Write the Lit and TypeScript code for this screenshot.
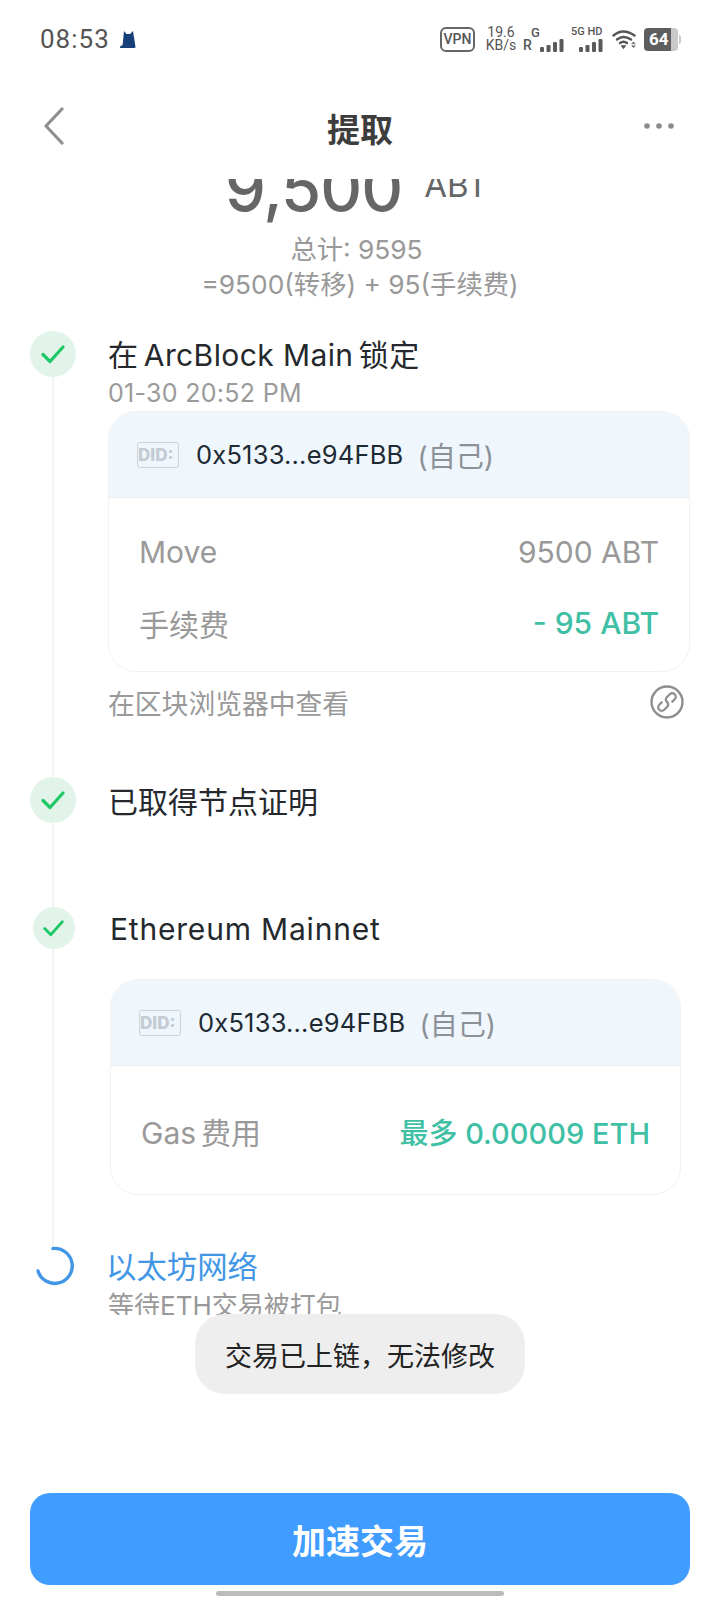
import { LitElement, html, css, svg } from "lit";
import { customElement } from "lit/decorators.js";

const check = html`<svg width="26" height="22" viewBox="0 0 26 22">
  <path d="M3 11.5 L10 18.5 L23 4" fill="none" stroke="#1fc866" stroke-width="3.2" stroke-linecap="round" stroke-linejoin="round" />
</svg>`;

const bars = () => svg`
  <rect x="0" y="8" width="4" height="5" rx="1.2" />
  <rect x="6.5" y="6" width="4" height="7" rx="1.2" />
  <rect x="13" y="3" width="4" height="10" rx="1.2" />
  <rect x="19.5" y="0" width="4" height="13" rx="1.2" />
`;

@customElement("app-root")
export class AppRoot extends LitElement {
  static styles = css`
    :host {
      display: block;
      position: relative;
      width: 720px;
      height: 1600px;
      overflow: hidden;
      background: #fff;
      color: #25292d;
      font-family: "Inter", "Noto Sans CJK SC", sans-serif;
    }

    /* status bar */
    .status {
      height: 78px;
      display: flex;
      align-items: center;
      justify-content: space-between;
      padding: 0 39px 0 40px;
      color: #555;
    }
    .status-left {
      display: flex;
      align-items: center;
      gap: 9px;
      font: 400 26px "Roboto", sans-serif;
      letter-spacing: 1px;
    }
    .status-right {
      display: flex;
      align-items: center;
      font-family: "Roboto", sans-serif;
    }
    .vpn {
      width: 31px;
      height: 21px;
      border: 2px solid #666;
      border-radius: 6px;
      font-size: 14px;
      font-weight: 500;
      line-height: 21px;
      text-align: center;
      margin-right: 10px;
    }
    .speed {
      width: 32px;
      font-size: 14px;
      line-height: 13px;
      text-align: center;
      margin-right: 6px;
    }
    .net {
      position: relative;
      width: 42px;
      height: 26px;
      font-size: 13px;
      font-weight: 500;
      line-height: 13px;
    }
    .net svg {
      position: absolute;
      right: 0;
      bottom: 0;
    }
    .net .g {
      position: absolute;
      top: 0;
      left: 8px;
    }
    .net .r {
      position: absolute;
      left: 0;
      bottom: 0;
      font-size: 14px;
    }
    .net5 {
      position: relative;
      width: 33px;
      height: 26px;
      margin: 0 8px 0 6px;
      font-size: 11px;
      font-weight: 500;
      line-height: 12px;
      white-space: nowrap;
    }
    .net5 svg {
      position: absolute;
      right: 0;
      bottom: 0;
    }
    .battery {
      display: flex;
      align-items: center;
      margin-left: 7px;
    }
    .battery .level {
      width: 27px;
      height: 23px;
      background: #5e5e5e;
      border-radius: 4px 0 0 4px;
      color: #fff;
      font-size: 17px;
      font-weight: 700;
      line-height: 23px;
      padding-left: 5px;
      box-sizing: border-box;
    }
    .battery .rest {
      width: 7px;
      height: 23px;
      background: #c9c9c9;
      border-radius: 0 4px 4px 0;
      margin-right: 1px;
    }
    .battery .nub {
      width: 2px;
      height: 9px;
      background: #c9c9c9;
      border-radius: 0 2px 2px 0;
    }

    /* nav */
    .nav {
      height: 95px;
      margin-bottom: 6px;
      display: flex;
      align-items: center;
      justify-content: space-between;
      padding: 0 46px 0 43px;
    }
    .nav h1 {
      flex: 1;
      margin: 4px 0 0;
      padding-left: 11px;
      text-align: center;
      font-size: 33px;
      font-weight: 700;
      color: #3d3d3d;
    }

    /* scrolling part, clipped under the nav and above the footer */
    .scroll {
      height: 1136px;
      overflow: hidden;
    }
    .amount {
      height: 46px;
      overflow: hidden;
    }
    .amount-inner {
      margin-top: -35px;
      display: flex;
      justify-content: center;
      color: #666;
      padding-right: 7px;
    }
    .amount-value {
      font-size: 65px;
      font-weight: 500;
      line-height: 88px;
      letter-spacing: -1px;
    }
    .amount-unit {
      font-size: 33px;
      line-height: 32px;
      margin: 25px 0 0 22px;
    }
    .total {
      color: #999;
      text-align: center;
      font-size: 26.3px;
      line-height: 35px;
      padding-top: 7px;
      height: 99px;
    }
    .total-sum {
      margin-right: 7px;
    }

    .steps {
      padding-left: 30px;
    }
    .step {
      display: flex;
      gap: 32px;
      width: 660px;
    }
    .rail {
      flex: none;
      width: 46px;
      display: flex;
      flex-direction: column;
      align-items: center;
    }
    .dot {
      flex: none;
      width: 46px;
      height: 46px;
      border-radius: 50%;
      background: #e2f3ea;
      display: flex;
      align-items: center;
      justify-content: center;
    }
    .dot.small {
      width: 42px;
      height: 42px;
      margin-left: 1px;
    }
    .dot.small svg {
      width: 23px;
      height: 20px;
    }
    .line {
      flex: 1;
      width: 2px;
      background: #f3f4f5;
    }
    .body {
      flex: 1;
      min-width: 0;
    }
    .s1 {
      height: 446px;
    }
    .s2 {
      height: 130px;
    }
    .s3 {
      height: 339px;
    }
    .s3 .body {
      padding-left: 2px;
    }
    .title {
      font-size: 30px;
      line-height: 48px;
      letter-spacing: 0.4px;
    }
    .s2 .title {
      letter-spacing: 0;
      padding-top: 1px;
    }
    .s3 .title {
      margin-top: -2px;
      letter-spacing: 0.8px;
    }
    .date {
      color: #9a9a9a;
      font-size: 25px;
      line-height: 28px;
      letter-spacing: 0.3px;
    }

    .card {
      border: 1px solid #f0f1f2;
      border-radius: 28px;
      overflow: hidden;
      margin-top: 4px;
    }
    .s3 .card {
      margin: 26px 9px 0 0;
    }
    .card-head {
      height: 85px;
      background: #eff7fd;
      border-bottom: 1px solid #e9edf0;
      display: flex;
      align-items: center;
      padding-left: 28px;
    }
    .did {
      width: 40px;
      height: 24px;
      border: 1px solid #ccd3d9;
      border-radius: 3px;
      color: #c4cbd2;
      font-size: 17px;
      font-weight: 800;
      line-height: 24px;
      overflow: hidden;
      margin-right: 17px;
      white-space: nowrap;
    }
    .addr {
      font-size: 25.5px;
      letter-spacing: 0.2px;
      color: #1e2a33;
    }
    .self {
      color: #8b9197;
      font-size: 28px;
      margin-left: 14px;
    }
    .card-body {
      padding: 18px 30px 13px;
    }
    .row {
      display: flex;
      justify-content: space-between;
      align-items: center;
      height: 71px;
      font-size: 30px;
      color: #999;
    }
    .s3 .card-body {
      padding: 29px 30px 28px;
    }
    .s3 .row .green {
      font-size: 29px;
    }
    .green {
      color: #3fc0a5;
      font-weight: 500;
    }
    .explorer {
      display: flex;
      align-items: center;
      justify-content: space-between;
      color: #999;
      font-size: 26.8px;
      height: 60px;
      padding-right: 6px;
    }

    .s4 .rail {
      padding-left: 3px;
      box-sizing: border-box;
    }
    .s4 .body {
      margin: -2px 0 0 -2px;
    }
    .s4 .title {
      color: #4396e6;
      font-size: 30.4px;
      line-height: 46px;
      letter-spacing: 0;
    }
    .s4 .sub {
      color: #999;
      font-size: 26px;
      line-height: 30px;
      margin-top: 1px;
      padding-left: 2px;
    }

    /* toast */
    .toast {
      position: absolute;
      left: 195px;
      top: 1314px;
      width: 330px;
      height: 80px;
      border-radius: 30px;
      background: #eeeeee;
      color: #222;
      font-size: 27px;
      line-height: 85px;
      text-align: center;
    }

    /* footer */
    .footer {
      padding: 178px 30px 0;
    }
    .btn {
      height: 92px;
      border-radius: 20px;
      background: #409cff;
      color: #fff;
      font-size: 34px;
      font-weight: 700;
      display: flex;
      align-items: center;
      justify-content: center;
    }
    .home {
      width: 288px;
      height: 5px;
      border-radius: 3px;
      background: #bcbcbc;
      margin: 6px auto 0;
    }
  `;

  private card(rows: unknown) {
    return html`<div class="card">
      <div class="card-head">
        <span class="did">DID:</span>
        <span class="addr">0x5133...e94FBB</span>
        <span class="self">(自己)</span>
      </div>
      <div class="card-body">${rows}</div>
    </div>`;
  }

  render() {
    return html`
      <div class="status">
        <div class="status-left">
          <span>08:53</span>
          <svg width="18" height="19" viewBox="0 0 18 19">
            <path d="M5 1 L7.5 4 H11 L14 1 L16.5 17 Q16.5 18 15 18 H2 Q0.5 18 1 16.5 L3.6 15 Z" fill="#17407a" />
          </svg>
        </div>
        <div class="status-right">
          <div class="vpn">VPN</div>
          <div class="speed">19.6<br />KB/s</div>
          <div class="net">
            <span class="g">G</span><span class="r">R</span>
            <svg width="25" height="13" fill="#5a5a5a">${bars()}</svg>
          </div>
          <div class="net5">
            5G HD
            <svg width="25" height="13" fill="#5a5a5a">${bars()}</svg>
          </div>
          <svg width="25" height="21" viewBox="0 0 25 21" fill="none" stroke="#555" stroke-width="2.4" stroke-linecap="round">
            <path d="M1.5 6.5 Q11 -1.5 22.5 6.5" />
            <path d="M5 10.5 Q11.5 5.5 19 10.5" />
            <path d="M8 14 Q11.5 11.5 15 14" />
            <path d="M10 17 L11.5 19 L13 17 Z" fill="#555" stroke-width="1.4" />
            <path d="M20 14.5 L21.5 13 L23 14.5 Z M20 17 L21.5 18.5 L23 17 Z" fill="#555" stroke-width="0.6" />
          </svg>
          <div class="battery">
            <div class="level">64</div>
            <div class="rest"></div>
            <div class="nub"></div>
          </div>
        </div>
      </div>

      <div class="nav">
        <svg width="22" height="38" viewBox="0 0 22 38" fill="none" stroke="#8f8f8f" stroke-width="3.2" stroke-linecap="round" stroke-linejoin="round">
          <path d="M19 2 L3 19 L19 36" />
        </svg>
        <h1>提取</h1>
        <svg width="30" height="6" viewBox="0 0 30 6" fill="#8a8a8a">
          <circle cx="3" cy="3" r="2.8" /><circle cx="15" cy="3" r="2.8" /><circle cx="27" cy="3" r="2.8" />
        </svg>
      </div>

      <div class="scroll">
        <div class="amount">
          <div class="amount-inner">
            <span class="amount-value">9,500</span>
            <span class="amount-unit">ABT</span>
          </div>
        </div>
        <div class="total"><span class="total-sum">总计: 9595</span><br />=9500(转移) + 95(手续费)</div>

        <div class="steps">
          <div class="step s1">
            <div class="rail">
              <div class="dot">${check}</div>
              <div class="line"></div>
            </div>
            <div class="body">
              <div class="title">在\u2006ArcBlock Main\u2006锁定</div>
              <div class="date">01-30 20:52 PM</div>
              ${this.card(html`
                <div class="row"><span>Move</span><span>9500 ABT</span></div>
                <div class="row"><span>手续费</span><span class="green">- 95 ABT</span></div>
              `)}
              <div class="explorer">
                <span>在区块浏览器中查看</span>
                <svg width="34" height="34" viewBox="0 0 34 34" fill="none" stroke="#8e8e8e">
                  <circle cx="17" cy="17" r="15.5" stroke-width="2.4" />
                  <g transform="rotate(-45 17 17)" stroke-width="2.2" stroke-linecap="round">
                    <path d="M13 13.5 H9.5 A3.5 3.5 0 0 0 9.5 20.5 H14.5 A3.5 3.5 0 0 0 17 17" />
                    <path d="M21 20.5 H24.5 A3.5 3.5 0 0 0 24.5 13.5 H19.5 A3.5 3.5 0 0 0 17 17" />
                  </g>
                </svg>
              </div>
            </div>
          </div>

          <div class="step s2">
            <div class="rail">
              <div class="dot">${check}</div>
              <div class="line"></div>
            </div>
            <div class="body">
              <div class="title">已取得节点证明</div>
            </div>
          </div>

          <div class="step s3">
            <div class="rail">
              <div class="dot small">${check}</div>
              <div class="line"></div>
            </div>
            <div class="body">
              <div class="title">Ethereum Mainnet</div>
              ${this.card(html`
                <div class="row"><span>Gas\u2006费用</span><span class="green">最多 0.00009 ETH</span></div>
              `)}
            </div>
          </div>

          <div class="step s4">
            <div class="rail">
              <svg width="40" height="40" viewBox="0 0 40 40" fill="none" stroke="#4396e6" stroke-width="3.4" stroke-linecap="round">
                <path d="M18 2.5 A17.5 17.5 0 1 1 3 25" />
              </svg>
            </div>
            <div class="body">
              <div class="title">以太坊网络</div>
              <div class="sub">等待ETH交易被打包</div>
            </div>
          </div>
        </div>
      </div>

      <div class="toast">交易已上链，无法修改</div>

      <div class="footer">
        <div class="btn">加速交易</div>
        <div class="home"></div>
      </div>
    `;
  }
}
